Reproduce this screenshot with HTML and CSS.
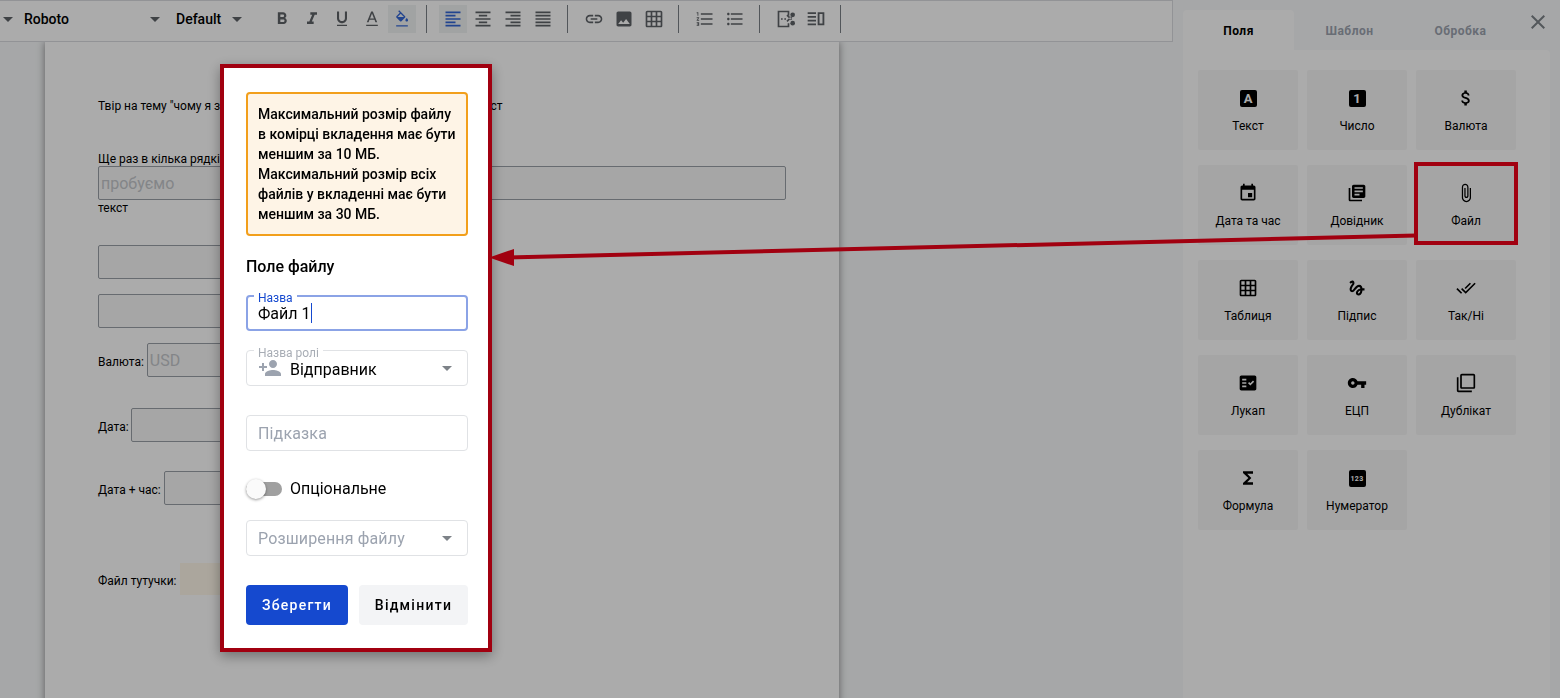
FILE: index.html
```html
<!DOCTYPE html>
<html lang="uk">
<head>
    <meta charset="UTF-8">
    <title>Шаблон документа</title>
    <link rel="stylesheet" href="styles.css">
</head>
<body>
    <div class="app">
        <!-- редактор -->
        <div class="editor">
            <div class="toolbar">
                <div class="select select-font"><i class="caret"></i><span>Roboto</span><i class="caret caret-end"></i></div>
                <div class="select select-size"><span>Default</span><i class="caret caret-end"></i></div>
                <button class="tool"><svg viewBox="0 0 24 24"><path d="M15.6 10.79c.97-.67 1.65-1.77 1.65-2.79 0-2.26-1.75-4-4-4H7v14h7.04c2.09 0 3.71-1.7 3.71-3.79 0-1.52-.86-2.82-2.15-3.42zM10 6.5h3c.83 0 1.5.67 1.5 1.5s-.67 1.5-1.5 1.5h-3v-3zm3.5 9H10v-3h3.5c.83 0 1.5.67 1.5 1.5s-.67 1.5-1.5 1.5z"/></svg></button>
                <button class="tool"><svg viewBox="0 0 24 24"><path d="M10 4v3h2.21l-3.42 8H6v3h8v-3h-2.21l3.42-8H18V4z"/></svg></button>
                <button class="tool"><svg viewBox="0 0 24 24"><path d="M12 17c3.31 0 6-2.69 6-6V3h-2.5v8c0 1.93-1.57 3.5-3.5 3.5S8.5 12.93 8.5 11V3H6v8c0 3.31 2.69 6 6 6zm-6 2v1.500h12V19H6z"/></svg></button>
                <button class="tool"><svg viewBox="0 0 24 24"><path d="M11 3L5.800 16h2.100l1.050-3h6.100l1.050 3h2.100L13 3h-2zm-1.380 8.300L12 5.500l2.380 5.800H9.620zM5 19h14v1.500H5z"/></svg></button>
                <button class="tool tool-on"><svg viewBox="0 0 24 24"><path transform="translate(2.500 1.500) scale(0.8)" d="M16.56 8.94L7.62 0 6.21 1.41l2.38 2.38-5.15 5.15c-.59.59-.59 1.54 0 2.12l5.5 5.5c.29.29.68.44 1.06.44s.77-.15 1.06-.44l5.5-5.5c.59-.58.59-1.53 0-2.12zM5.21 10L10 5.21 14.79 10H5.21zM19 11.5s-2 2.17-2 3.5c0 1.1.9 2 2 2s2-.9 2-2c0-1.33-2-3.5-2-3.500z"/><path d="M5 19.500h14V21H5z"/></svg></button>
                <span class="divider"></span>
                <button class="tool tool-on"><svg viewBox="0 0 24 24"><path d="M15 15H3v2h12v-2zm0-8H3v2h12V7zM3 13h18v-2H3v2zm0 8h18v-2H3v2zM3 3v2h18V3H3z"/></svg></button>
                <button class="tool"><svg viewBox="0 0 24 24"><path d="M7 15v2h10v-2H7zm-4 6h18v-2H3v2zm0-8h18v-2H3v2zm4-6v2h10V7H7zM3 3v2h18V3H3z"/></svg></button>
                <button class="tool"><svg viewBox="0 0 24 24"><path d="M3 21h18v-2H3v2zm6-4h12v-2H9v2zm-6-4h18v-2H3v2zm6-4h12V7H9v2zM3 3v2h18V3H3z"/></svg></button>
                <button class="tool"><svg viewBox="0 0 24 24"><path d="M3 21h18v-2H3v2zm0-4h18v-2H3v2zm0-4h18v-2H3v2zm0-4h18V7H3v2zm0-6v2h18V3H3z"/></svg></button>
                <span class="divider"></span>
                <button class="tool"><svg viewBox="0 0 24 24"><path d="M3.9 12c0-1.71 1.39-3.1 3.1-3.1h4V7H7c-2.76 0-5 2.24-5 5s2.24 5 5 5h4v-1.9H7c-1.71 0-3.1-1.39-3.1-3.1zM8 13h8v-2H8v2zm9-6h-4v1.9h4c1.71 0 3.1 1.39 3.1 3.1s-1.39 3.1-3.1 3.1h-4V17h4c2.76 0 5-2.24 5-5s-2.24-5-5-5z"/></svg></button>
                <button class="tool"><svg viewBox="0 0 24 24"><path d="M21 19V5c0-1.1-.9-2-2-2H5c-1.1 0-2 .9-2 2v14c0 1.1.9 2 2 2h14c1.1 0 2-.9 2-2zM8.5 13.5l2.5 3.01L14.5 12l4.5 6H5l3.5-4.5z"/></svg></button>
                <button class="tool"><svg viewBox="0 0 24 24"><path d="M20 2H4c-1.1 0-2 .9-2 2v16c0 1.1.9 2 2 2h16c1.1 0 2-.9 2-2V4c0-1.1-.9-2-2-2zM8 20H4v-4h4v4zm0-6H4v-4h4v4zm0-6H4V4h4v4zm6 12h-4v-4h4v4zm0-6h-4v-4h4v4zm0-6h-4V4h4v4zm6 12h-4v-4h4v4zm0-6h-4v-4h4v4zm0-6h-4V4h4v4z"/></svg></button>
                <span class="divider"></span>
                <button class="tool"><svg viewBox="0 0 24 24"><path d="M2 17h2v.5H3v1h1v.5H2v1h3v-4H2v1zm1-9h1V4H2v1h1v3zm-1 3h1.8L2 13.1v.9h3v-1H3.2L5 10.9V10H2v1zm5-6v2h14V5H7zm0 14h14v-2H7v2zm0-6h14v-2H7v2z"/></svg></button>
                <button class="tool"><svg viewBox="0 0 24 24"><path d="M4 10.5c-.83 0-1.5.67-1.5 1.5s.67 1.5 1.5 1.5 1.5-.67 1.5-1.5-.67-1.5-1.5-1.5zm0-6c-.83 0-1.5.67-1.5 1.5S3.17 7.5 4 7.5 5.5 6.83 5.5 6 4.83 4.5 4 4.5zm0 12c-.83 0-1.5.68-1.5 1.5s.68 1.5 1.5 1.5 1.5-.68 1.5-1.5-.67-1.5-1.5-1.5zM7 19h14v-2H7v2zm0-6h14v-2H7v2zm0-8v2h14V5H7z"/></svg></button>
                <span class="divider"></span>
                <button class="tool"><svg viewBox="0 0 24 24"><path d="M2 2h14v6h-2V4H4v16h10v-3h2v5H2zM6 11h2v2H6zM10 11h2v2h-2z"/><circle cx="20" cy="7" r="2.800"/><circle cx="20" cy="17" r="2.800"/><path d="M12.500 8l1.400-1.400 5.500 5.500-1.400 1.400zM19.400 10l-1.400-1.400-5.500 5.500 1.400 1.400z"/></svg></button>
                <button class="tool"><svg viewBox="0 0 24 24"><path d="M2 4h10v2H2zM2 8.500h10v2H2zM2 13h10v2H2zM2 17.500h10v2H2z"/><path fill-rule="evenodd" d="M14 4h8v15.500h-8zM16.200 6v11.500h3.600V6z"/></svg></button>
                <span class="divider"></span>
            </div>
            <div class="doc-area">
                <div class="paper">
                    <p class="line line-first">Твір на тему "чому я знову і знову пишу ось оцей довгий тестовий текст</p>
                    <p class="line line-second">Ще раз в кілька рядків</p>
                    <div class="doc-input doc-input-wide">пробуємо</div>
                    <p class="line">текст</p>
                    <div class="doc-input doc-input-short doc-input-a"></div>
                    <div class="doc-input doc-input-short doc-input-b"></div>
                    <div class="doc-row doc-row-currency"><span>Валюта:</span><div class="doc-input doc-input-short">USD</div></div>
                    <div class="doc-row doc-row-date"><span>Дата:</span><div class="doc-input doc-input-short"></div></div>
                    <div class="doc-row doc-row-time"><span>Дата + час:</span><div class="doc-input doc-input-short"></div></div>
                    <div class="doc-row doc-row-file"><span>Файл тутучки:</span><div class="doc-file"></div></div>
                </div>
            </div>
        </div>

        <!-- панель полів -->
        <div class="side">
            <div class="tabs">
                <div class="tab tab-on">Поля</div>
                <div class="tab">Шаблон</div>
                <div class="tab">Обробка</div>
                <svg class="close" viewBox="0 0 24 24"><path d="M19 6.410L17.590 5 12 10.590 6.410 5 5 6.410 10.590 12 5 17.590 6.410 19 12 13.410 17.590 19 19 17.590 13.410 12z"/></svg>
            </div>
            <div class="panel">
                <div class="tile"><span class="badge badge-letter">A</span><span>Текст</span></div>
                <div class="tile"><span class="badge badge-letter">1</span><span>Число</span></div>
                <div class="tile"><svg viewBox="0 0 24 24"><path d="M11.800 10.900c-2.270-.590-3-1.200-3-2.150 0-1.090 1.010-1.850 2.700-1.850 1.780 0 2.440.850 2.500 2.100h2.210c-.070-1.720-1.120-3.300-3.210-3.810V3h-3v2.160c-1.940.420-3.500 1.680-3.500 3.610 0 2.310 1.910 3.460 4.700 4.130 2.500.600 3 1.480 3 2.410 0 .690-.490 1.790-2.700 1.790-2.060 0-2.870-.920-2.980-2.100h-2.200c.120 2.190 1.760 3.420 3.680 3.830V21h3v-2.150c1.950-.370 3.500-1.500 3.500-3.550 0-2.840-2.430-3.810-4.700-4.400z"/></svg><span>Валюта</span></div>
                <div class="tile"><svg viewBox="0 0 24 24"><path d="M17 12h-5v5h5v-5zM16 1v2H8V1H6v2H5c-1.110 0-1.990.900-1.990 2L3 19c0 1.100.890 2 2 2h14c1.100 0 2-.900 2-2V5c0-1.100-.900-2-2-2h-1V1h-2zm3 18H5V8h14v11z"/></svg><span>Дата та час</span></div>
                <div class="tile"><svg viewBox="0 0 24 24"><path d="M4 6H2v14c0 1.100.900 2 2 2h14v-2H4V6zm16-4H8c-1.100 0-2 .900-2 2v12c0 1.100.900 2 2 2h12c1.100 0 2-.900 2-2V4c0-1.100-.900-2-2-2zm-1 9H9V9h10v2zm-4 4H9v-2h6v2zm4-8H9V5h10v2z"/></svg><span>Довідник</span></div>
                <div class="tile"><svg viewBox="0 0 24 24"><path d="M16.500 6v11.500c0 2.210-1.790 4-4 4s-4-1.790-4-4V5c0-1.380 1.120-2.500 2.500-2.500s2.500 1.120 2.500 2.500v10.500c0 .550-.450 1-1 1s-1-.450-1-1V6H10v9.500c0 1.380 1.120 2.500 2.500 2.500s2.500-1.120 2.500-2.500V5c0-2.210-1.790-4-4-4S7 2.790 7 5v12.500c0 3.040 2.460 5.500 5.500 5.500s5.500-2.460 5.500-5.500V6h-1.500z"/></svg><span>Файл</span></div>
                <div class="tile"><svg viewBox="0 0 24 24"><path d="M20 2H4c-1.100 0-2 .900-2 2v16c0 1.100.900 2 2 2h16c1.100 0 2-.900 2-2V4c0-1.100-.900-2-2-2zM8 20H4v-4h4v4zm0-6H4v-4h4v4zm0-6H4V4h4v4zm6 12h-4v-4h4v4zm0-6h-4v-4h4v4zm0-6h-4V4h4v4zm6 12h-4v-4h4v4zm0-6h-4v-4h4v4zm0-6h-4V4h4v4z"/></svg><span>Таблиця</span></div>
                <div class="tile"><svg viewBox="0 0 24 24"><path d="M4.590 6.890c.700-.710 1.400-1.350 1.710-1.220.500.200 0 1.030-.300 1.520-.250.420-2.860 3.890-2.860 6.310 0 1.280.480 2.340 1.340 2.980.750.560 1.740.730 2.640.460 1.070-.310 1.950-1.400 3.060-2.770 1.210-1.490 2.830-3.440 4.080-3.440 1.630 0 1.650 1.010 1.760 1.790-3.780.640-5.380 3.670-5.380 5.370 0 1.700 1.440 3.090 3.210 3.090 1.630 0 4.290-1.330 4.690-6.100H21v-2.500h-2.470c-.150-1.650-1.090-4.200-4.030-4.200-2.250 0-4.180 1.910-4.940 2.840-.580.730-2.060 2.480-2.290 2.720-.250.300-.680.840-1.110.840-.450 0-.720-.830-.360-1.920.350-1.090 1.400-2.860 1.850-3.520.780-1.140 1.300-1.920 1.300-3.280C8.950 3.690 7.310 3 6.440 3 5.120 3 3.970 4 3.720 4.250c-.360.360-.660.660-.880.930l1.750 1.710zm9.290 11.660c-.310 0-.740-.260-.740-.720 0-.600.730-2.200 2.870-2.760-.300 2.690-1.430 3.480-2.130 3.480z"/></svg><span>Підпис</span></div>
                <div class="tile"><svg viewBox="0 0 24 24"><path d="M18 7l-1.410-1.410-6.340 6.340 1.410 1.410L18 7zm4.240-1.410L11.660 16.170 7.480 12l-1.410 1.410L11.660 19l12-12-1.420-1.410zM.410 13.410L6 19l1.410-1.410L1.830 12 .410 13.410z"/></svg><span>Так/Ні</span></div>
                <div class="tile"><svg viewBox="0 0 24 24"><path d="M20 3H4c-1.100 0-2 .900-2 2v14c0 1.100.900 2 2 2h16c1.100 0 2-.900 2-2V5c0-1.100-.900-2-2-2zM10 17H5v-2h5v2zm0-4H5v-2h5v2zm0-4H5V7h5v2zm4.820 6L12 12.160l1.410-1.410 1.410 1.420L17.990 9l1.420 1.420L14.820 15z"/></svg><span>Лукап</span></div>
                <div class="tile"><svg viewBox="0 0 24 24"><path d="M12.650 10C11.830 7.670 9.610 6 7 6c-3.310 0-6 2.690-6 6s2.690 6 6 6c2.610 0 4.830-1.670 5.650-4H17v4h4v-4h2v-4H12.650zM7 14c-1.100 0-2-.900-2-2s.900-2 2-2 2 .900 2 2-.900 2-2 2z"/></svg><span>ЕЦП</span></div>
                <div class="tile"><svg viewBox="0 0 24 24"><path d="M3 5H1v16c0 1.100.900 2 2 2h16v-2H3V5zm18-4H7c-1.100 0-2 .900-2 2v14c0 1.100.900 2 2 2h14c1.100 0 2-.900 2-2V3c0-1.100-.900-2-2-2zm0 16H7V3h14v14z"/></svg><span>Дублікат</span></div>
                <div class="tile"><svg viewBox="0 0 24 24"><path d="M18 4H6v2l6.500 6L6 18v2h12v-3h-7l5-5-5-5h7z"/></svg><span>Формула</span></div>
                <div class="tile"><span class="badge badge-num">123</span><span>Нумератор</span></div>
            </div>
        </div>
    </div>

    <div class="dim"></div>

    <!-- діалог поля -->
    <div class="dialog">
        <div class="alert">Максимальний розмір файлу в комірці вкладення має бути меншим за 10 МБ. Максимальний розмір всіх файлів у вкладенні має бути меншим за 30 МБ.</div>
        <div class="dialog-title">Поле файлу</div>
        <div class="field field-focus">
            <label>Назва</label>
            <span class="field-value">Файл 1</span><i class="cursor"></i>
        </div>
        <div class="field field-role">
            <label>Назва ролі</label>
            <svg class="role-icon" viewBox="0 0 24 24"><path d="M15 12c2.210 0 4-1.790 4-4s-1.790-4-4-4-4 1.790-4 4 1.790 4 4 4zm-9-2V7H4v3H1v2h3v3h2v-3h3v-2H6zm9 4c-2.670 0-8 1.340-8 4v2h16v-2c0-2.660-5.330-4-8-4z"/></svg>
            <span class="field-value">Відправник</span>
            <i class="caret caret-end caret-field"></i>
        </div>
        <div class="field field-hint"><span class="placeholder">Підказка</span></div>
        <div class="switch-row"><span class="switch"><i class="switch-thumb"></i></span><span class="switch-label">Опціональне</span></div>
        <div class="field field-ext"><span class="placeholder">Розширення файлу</span><i class="caret caret-end caret-field"></i></div>
        <div class="dialog-actions">
            <button class="btn btn-save">Зберегти</button>
            <button class="btn btn-cancel">Відмінити</button>
        </div>
    </div>

    <!-- позначки поверх скріншота -->
    <div class="mark-frame"></div>
    <svg class="mark-arrow" viewBox="0 0 1560 698"><path d="M1416 235.500L505 257.500" stroke="#a10010" stroke-width="4" fill="none"/><path d="M489 257.500L514 249V266z" fill="#a10010"/></svg>
</body>
</html>
```

FILE: styles.css
```css
/* загальне */
* {
    box-sizing: border-box;
}
body {
    margin: 0;
    height: 698px;
    overflow: hidden;
    font-family: Roboto, "Noto Sans", sans-serif;
    font-size: 12px;
    color: #000;
    background-color: #f8fafb;
}
.app {
    display: flex;
    height: 698px;
}
.dim {
    position: fixed;
    top: 0;
    right: 0;
    bottom: 0;
    left: 0;
    background-color: rgba(0, 0, 0, 0.33);
}

/* панель інструментів */
.editor {
    width: 1173px;
    flex-shrink: 0;
    display: flex;
    flex-direction: column;
}
.toolbar {
    height: 42px;
    display: flex;
    align-items: flex-start;
    padding-top: 4px;
    background-color: #fff;
    border-top: 1px solid #dadce0;
    border-bottom: 1px solid #dadce0;
    border-right: 1px solid #dadce0;
}
.select {
    display: flex;
    align-items: center;
    height: 28px;
    font-size: 14px;
    font-weight: 500;
}
.select-font {
    width: 176px;
    padding-left: 3px;
}
.select-font span {
    margin-left: 11px;
}
.select-size {
    width: 91px;
}
.caret {
    display: block;
    width: 0;
    height: 0;
    border-left: 5px solid transparent;
    border-right: 5px solid transparent;
    border-top: 5px solid #5f6368;
}
.select-font .caret-end {
    margin-left: 81px;
}
.select-size .caret-end {
    margin-left: 11px;
}
.tool {
    width: 28px;
    height: 28px;
    margin: 0 1px;
    padding: 0;
    border: 0;
    background: none;
    display: flex;
    align-items: center;
    justify-content: center;
}
.tool svg {
    width: 20px;
    height: 20px;
    fill: #5f6368;
}
.tool-on {
    background-color: #f1f3f4;
}
.tool-on svg {
    fill: #3367d6;
}
.divider {
    width: 1px;
    height: 28px;
    margin: 0 11px 0 9px;
    background-color: #7b8087;
}

/* документ */
.doc-area {
    flex: 1;
    overflow: hidden;
    padding: 0 0 0 45px;
}
.paper {
    width: 794px;
    height: 900px;
    padding: 57px 0 0 53px;
    background-color: #fff;
    box-shadow: 0 0 8px rgba(0, 0, 0, 0.45);
}
.line {
    margin: 0;
    line-height: 14px;
    white-space: nowrap;
}
.line-second {
    margin-top: 39px;
}
.doc-input {
    height: 34px;
    padding-left: 2px;
    background-color: #f8f8f8;
    border: 1px solid #9aa0a8;
    border-radius: 2px;
    font-size: 16px;
    line-height: 34px;
    color: #c4c7cb;
}
.doc-input-wide {
    width: 688px;
    margin-bottom: 1px;
}
.doc-input-short {
    width: 200px;
}
.doc-input-a {
    margin-top: 30px;
}
.doc-input-b {
    margin-top: 15px;
}
.doc-row {
    display: flex;
    align-items: center;
    gap: 3px;
}
.doc-row span {
    padding-top: 3px;
}
.doc-row-currency {
    margin-top: 15px;
}
.doc-row-date {
    margin-top: 31px;
    gap: 2px;
}
.doc-row-time {
    margin-top: 29px;
}
.doc-row-file {
    margin-top: 58px;
}
.doc-file {
    width: 120px;
    height: 32px;
    background-color: #fff8ea;
}

/* права панель */
.side {
    flex: 1;
    padding: 10px 10px 0;
}
.tabs {
    display: flex;
    height: 40px;
    position: relative;
}
.tab {
    width: 111px;
    line-height: 42px;
    text-align: center;
    font-weight: 700;
    letter-spacing: 0.5px;
    color: #9ca3af;
    border-radius: 4px 4px 0 0;
}
.tab-on {
    color: #000;
    background-color: #fff;
}
.close {
    position: absolute;
    top: 0;
    right: 0;
    width: 24px;
    height: 24px;
    fill: #7d8288;
}
.panel {
    height: 648px;
    padding: 20px 15px;
    display: grid;
    grid-template-columns: repeat(3, 100px);
    grid-auto-rows: 80px;
    column-gap: 9px;
    row-gap: 15px;
    background-color: #fff;
    border-radius: 0 4px 0 0;
}
.tile {
    display: flex;
    flex-direction: column;
    align-items: center;
    padding-top: 18px;
    background-color: #f7f7f7;
    border-radius: 2px;
}
.tile svg {
    width: 20px;
    height: 20px;
}
.tile > span:last-child {
    margin-top: 10px;
    line-height: 16px;
}
.tile .badge {
    display: flex;
    align-items: center;
    justify-content: center;
    width: 17px;
    height: 17px;
    margin: 2px 0 1px;
    background-color: #000;
    border-radius: 2px;
    color: #fff;
    font-weight: 700;
    font-size: 13px;
}
.tile .badge-num {
    font-size: 7px;
    letter-spacing: 0.3px;
}

/* діалог */
.dialog {
    position: fixed;
    top: 64px;
    left: 220px;
    width: 272px;
    height: 588px;
    padding: 24px 20px 24px 22px;
    background-color: #fff;
    border: 4px solid #a10010;
    box-shadow: 0 4px 12px rgba(0, 0, 0, 0.35);
}
.alert {
    padding: 10px;
    background-color: #fef4e6;
    border: 2px solid #f29f1b;
    border-radius: 4px;
    font-size: 14px;
    font-weight: 500;
    line-height: 20px;
}
.dialog-title {
    margin-top: 21px;
    font-size: 16px;
    font-weight: 500;
    line-height: 20px;
}
.field {
    position: relative;
    display: flex;
    align-items: center;
    height: 36px;
    padding: 0 11px;
    border: 1px solid #e0e2e5;
    border-radius: 4px;
    font-size: 16px;
}
.field label {
    position: absolute;
    top: -3px;
    left: 7px;
    padding: 0 4px;
    background-color: #fff;
    font-size: 12px;
    line-height: 10px;
    color: #a8adb5;
}
.field-focus {
    margin-top: 18px;
    border: 2px solid #8ba3e6;
    padding-left: 10px;
}
.field-focus label {
    top: -4px;
    left: 6px;
    color: #1549cf;
}
.cursor {
    width: 1px;
    height: 20px;
    background-color: #1549cf;
}
.field-role {
    margin-top: 19px;
    padding-top: 2px;
}
.role-icon {
    width: 24px;
    height: 24px;
    margin: -2px 8px 0 0;
    fill: #9ca3af;
}
.caret-field {
    position: absolute;
    right: 15px;
    top: 15px;
    border-top-color: #7d8288;
}
.placeholder {
    color: #9ca3af;
    letter-spacing: 0.15px;
}
.field-hint {
    margin-top: 29px;
}
.switch-row {
    display: flex;
    align-items: center;
    gap: 8px;
    height: 20px;
    margin-top: 28px;
    font-size: 16px;
}
.switch-label {
    margin-top: -2px;
}
.switch {
    position: relative;
    width: 36px;
    height: 14px;
    background-color: #a0a0a0;
    border-radius: 7px;
}
.switch-thumb {
    position: absolute;
    top: -3px;
    left: 0;
    width: 20px;
    height: 20px;
    background-color: #fafafa;
    border-radius: 50%;
    box-shadow: 0 1px 3px rgba(0, 0, 0, 0.4);
}
.field-ext {
    margin-top: 21px;
}
.dialog-actions {
    display: flex;
    justify-content: space-between;
    margin-top: 29px;
}
.btn {
    height: 40px;
    padding: 0;
    border: 0;
    border-radius: 4px;
    font-family: inherit;
    font-size: 14px;
    font-weight: 500;
    letter-spacing: 1.25px;
}
.btn-save {
    width: 102px;
    color: #fff;
    background-color: #1549cf;
}
.btn-cancel {
    width: 109px;
    color: #000;
    background-color: #f3f4f6;
}

/* рамка і стрілка */
.mark-frame {
    position: fixed;
    top: 162px;
    left: 1414px;
    width: 104px;
    height: 83px;
    border: 4px solid #a10010;
}
.mark-arrow {
    position: fixed;
    top: 0;
    left: 0;
    width: 1560px;
    height: 698px;
    pointer-events: none;
}
```
